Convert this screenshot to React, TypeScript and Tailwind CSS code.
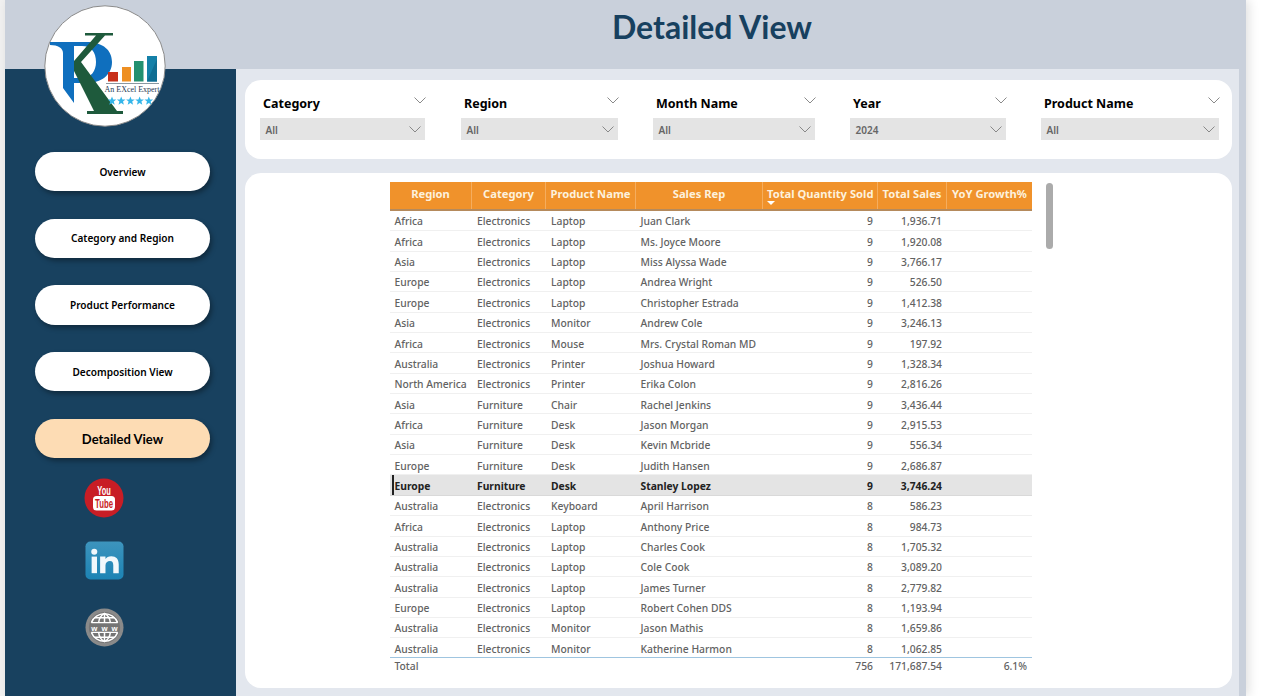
const NAV = ["Overview", "Category and Region", "Product Performance", "Decomposition View"];

const FILTERS = [
  { t: "Category", v: "All", w: "w-[165px]", ml: "ml-0" },
  { t: "Region", v: "All", w: "w-[157px]", ml: "ml-[36px]" },
  { t: "Month Name", v: "All", w: "w-[162px]", ml: "ml-[35px]" },
  { t: "Year", v: "2024", w: "w-[156px]", ml: "ml-[35px]" },
  { t: "Product Name", v: "All", w: "w-[178px]", ml: "ml-[35px]" },
];

const ROWS: string[][] = [
  ["Africa", "Electronics", "Laptop", "Juan Clark", "9", "1,936.71"],
  ["Africa", "Electronics", "Laptop", "Ms. Joyce Moore", "9", "1,920.08"],
  ["Asia", "Electronics", "Laptop", "Miss Alyssa Wade", "9", "3,766.17"],
  ["Europe", "Electronics", "Laptop", "Andrea Wright", "9", "526.50"],
  ["Europe", "Electronics", "Laptop", "Christopher Estrada", "9", "1,412.38"],
  ["Asia", "Electronics", "Monitor", "Andrew Cole", "9", "3,246.13"],
  ["Africa", "Electronics", "Mouse", "Mrs. Crystal Roman MD", "9", "197.92"],
  ["Australia", "Electronics", "Printer", "Joshua Howard", "9", "1,328.34"],
  ["North America", "Electronics", "Printer", "Erika Colon", "9", "2,816.26"],
  ["Asia", "Furniture", "Chair", "Rachel Jenkins", "9", "3,436.44"],
  ["Africa", "Furniture", "Desk", "Jason Morgan", "9", "2,915.53"],
  ["Asia", "Furniture", "Desk", "Kevin Mcbride", "9", "556.34"],
  ["Europe", "Furniture", "Desk", "Judith Hansen", "9", "2,686.87"],
  ["Europe", "Furniture", "Desk", "Stanley Lopez", "9", "3,746.24"],
  ["Australia", "Electronics", "Keyboard", "April Harrison", "8", "586.23"],
  ["Africa", "Electronics", "Laptop", "Anthony Price", "8", "984.73"],
  ["Australia", "Electronics", "Laptop", "Charles Cook", "8", "1,705.32"],
  ["Australia", "Electronics", "Laptop", "Cole Cook", "8", "3,089.20"],
  ["Australia", "Electronics", "Laptop", "James Turner", "8", "2,779.82"],
  ["Europe", "Electronics", "Laptop", "Robert Cohen DDS", "8", "1,193.94"],
  ["Australia", "Electronics", "Monitor", "Jason Mathis", "8", "1,659.86"],
  ["Australia", "Electronics", "Monitor", "Katherine Harmon", "8", "1,062.85"],
];

const COLS = "grid grid-cols-[82px_74px_90px_127px_115px_69px_85px]";
const SANS = "font-['Noto_Sans','Open_Sans',sans-serif]";
const STAR = "M0 -4.4 L1.2 -1.4 L4.3 -1.4 L1.8 0.6 L2.7 3.7 L0 1.9 L-2.7 3.7 L-1.8 0.6 L-4.3 -1.4 L-1.2 -1.4 Z";

function Chevron({ className }: { className?: string }) {
  return (
    <svg width="12" height="7" viewBox="0 0 12 7" fill="none" className={className}>
      <path d="M0.5 0.5 L6 6 L11.5 0.5" stroke="#7d7d7d" strokeWidth="0.9" />
    </svg>
  );
}

function Logo() {
  return (
    <svg viewBox="0 0 122 122" className="w-full h-full">
      <circle cx="61" cy="61" r="60.2" fill="#fff" stroke="#8a8a8a" strokeWidth="1" />
      {/* R */}
      <path
        fillRule="evenodd"
        d="M6 37 H42 C60 37 68 46 68 57 C68 70 57 78 43 78 H30 V98 L19 83 V48 C19 43 14 40 6 40 Z M30 41 V73 H38 C47 73 52 66 52 57 C52 47 47 41 38 41 Z"
        fill="#0f6fbe"
      />
      {/* K */}
      <path
        d="M41 28 H69 V30.5 H61 L37 57 L73 106 H79 V109 H43 V106 H50 L30 66 V56 L52 30.5 H41 Z"
        fill="#1e5a3c"
      />
      {/* bars */}
      <rect x="64" y="67" width="10" height="9.5" fill="#c8301a" />
      <rect x="78" y="62" width="9" height="14.5" fill="#ee8f22" />
      <rect x="90" y="56" width="9.5" height="20.5" fill="#23906f" />
      <rect x="103" y="51" width="10" height="25.5" fill="#1480a8" />
      <path d="M103 76.5 L113 54 V76.5 Z" fill="#0f6d92" />
      <rect x="62" y="78" width="53" height="0.8" fill="#6d7f8a" />
      <text x="88" y="86.5" textAnchor="middle" fontSize="7.6" fontFamily="'Liberation Serif', serif" fill="#1f3b55" textLength="55" lengthAdjust="spacingAndGlyphs">
        An EXcel Expert
      </text>
      {[68, 77.2, 86.4, 95.6, 104.8].map((x) => (
        <path key={x} d={STAR} transform={`translate(${x} 96)`} fill="#35b6ea" />
      ))}
    </svg>
  );
}

function YouTube() {
  return (
    <svg viewBox="0 0 40 40" className="w-[40px] h-[40px]">
      <circle cx="20" cy="20" r="19.5" fill="#c81d25" />
      <text x="20" y="16.5" textAnchor="middle" fontSize="12" fontWeight="700" fill="#fff" fontFamily="'Liberation Sans',sans-serif" textLength="13.5" lengthAdjust="spacingAndGlyphs">You</text>
      <rect x="9" y="18" width="22" height="14.5" rx="3.5" fill="#fff" />
      <text x="20" y="29.5" textAnchor="middle" fontSize="12.5" fontWeight="700" fill="#c81d25" fontFamily="'Liberation Sans',sans-serif" textLength="18" lengthAdjust="spacingAndGlyphs">Tube</text>
    </svg>
  );
}

function LinkedIn() {
  return (
    <svg viewBox="0 0 40 40" className="w-[39px] h-[39px]">
      <defs>
        <linearGradient id="li" x1="0" y1="0" x2="0" y2="1">
          <stop offset="0" stopColor="#3d94bd" />
          <stop offset="1" stopColor="#1c83b4" />
        </linearGradient>
      </defs>
      <rect x="0.5" y="0.5" width="39" height="39" rx="5" fill="url(#li)" />
      <circle cx="9.5" cy="11" r="3.1" fill="#f2f8fb" />
      <rect x="6.8" y="16" width="5.5" height="17" fill="#f2f8fb" />
      <path d="M15.5 16 H21 V18.5 C22 17 24 15.6 27 15.6 C32 15.6 34.6 18.6 34.6 24 V33 H29 V24.8 C29 22 28 20.4 25.6 20.4 C23 20.4 21 22 21 25 V33 H15.5 Z" fill="#f2f8fb" />
    </svg>
  );
}

function Web() {
  return (
    <svg viewBox="0 0 40 40" className="w-[39px] h-[39px]">
      <circle cx="20" cy="20" r="19.5" fill="#8a8a8a" />
      <circle cx="20" cy="20" r="16" fill="#757575" />
      <g fill="none" stroke="#fff" strokeWidth="1.5">
        <path d="M6.5 15 A14.5 14.5 0 0 1 33.5 15" />
        <path d="M6.5 25 A14.5 14.5 0 0 0 33.5 25" />
        <path d="M14 15 C14.5 10 17 7 20 5.5 C23 7 25.5 10 26 15" />
        <path d="M14 25 C14.5 30 17 33 20 34.5 C23 33 25.5 30 26 25" />
        <path d="M20 5.5 V15 M20 25 V34.5" />
        <path d="M9.5 10 H30.5 M9.5 30 H30.5" />
        <path d="M6.5 15 H33.5 M6.5 25 H33.5" />
      </g>
      <text x="20" y="23.2" textAnchor="middle" fontSize="8" fontWeight="700" fill="#fff" fontFamily="'Liberation Sans',sans-serif" textLength="27" lengthAdjust="spacing">www</text>
    </svg>
  );
}

export default function App() {
  return (
    <div className={`relative w-[1280px] h-[696px] overflow-hidden bg-white flex ${SANS}`}>
      <div className="w-[5px] h-full bg-[#f1f1f1]" />
      <div className="w-[1241px] h-full flex flex-col bg-[#c9d0db] shadow-[3px_0_10px_rgba(0,0,0,0.12)]">
        <header className="h-[69px] shrink-0 flex justify-center items-start pt-[5px] pl-[173px]">
          <h1 className="font-['Lato',sans-serif] font-bold text-[32px] leading-[44px] text-[#17405f]">
            Detailed View
          </h1>
        </header>
        <div className="flex-1 flex min-h-0">
          <aside className="w-[231px] shrink-0 bg-[#18415f] flex flex-col items-center pt-[83px] pl-[4px]">
            <div className="flex flex-col gap-[27.3px]">
              {NAV.map((t) => (
                <button
                  key={t}
                  className="w-[175px] h-[39.4px] rounded-[20px] bg-white shadow-[2px_3px_5px_rgba(0,0,0,0.35)] text-[10.1px] font-semibold text-black flex items-center justify-center pt-[1px]"
                >
                  {t}
                </button>
              ))}
              <button className="w-[175px] h-[39.4px] rounded-[20px] bg-[#fddcb4] shadow-[2px_3px_5px_rgba(0,0,0,0.35)] font-['Lato',sans-serif] text-[13px] font-bold text-black flex items-center justify-center pt-[3px]">
                Detailed View
              </button>
            </div>
            <div className="flex flex-col items-center w-[40px] mr-[37px] mt-[20px]">
              <YouTube />
              <div className="mt-[23px]"><LinkedIn /></div>
              <div className="mt-[28px]"><Web /></div>
            </div>
          </aside>
          <main className="flex-1 bg-[#e3e7ee] mr-[7px] pl-[9px] pr-[7px] pt-[11px] flex flex-col">
            <section className="h-[79px] shrink-0 bg-white rounded-[16px] flex pl-[15px] pt-[14px]">
              {FILTERS.map((f) => (
                <div key={f.t} className={`${f.w} ${f.ml} shrink-0`}>
                  <div className="h-[24px] flex items-start justify-between pl-[3px] pr-[1px] pt-[1px]">
                    <span className="text-[12.5px] leading-[18px] font-bold text-black">{f.t}</span>
                    <Chevron className="mt-[2px] -mr-[2px]" />
                  </div>
                  <div className="h-[22px] bg-[#e4e4e4] flex items-center justify-between pl-[5.5px] pr-[4.5px]">
                    <span className="text-[10px] font-semibold text-[#666] pt-[2px]">{f.v}</span>
                    <Chevron className="mt-[1px]" />
                  </div>
                </div>
              ))}
            </section>
            <section className="relative mt-[14px] h-[515px] shrink-0 bg-white rounded-[16px] pt-[9px] pl-[145px]">
              <div className="w-[642px]">
                <div className={`${COLS} h-[29px] bg-[#f0922b] border-b-2 border-[#b58a5c] text-[11.2px] font-bold text-[#fdf1dd]`}>
                  {["Region", "Category", "Product Name", "Sales Rep"].map((t) => (
                    <div key={t} className="flex justify-center pt-[4px] border-r border-[#f5ad5e] whitespace-nowrap">{t}</div>
                  ))}
                  <div className="relative pl-[4px] pt-[4px] border-r border-[#f5ad5e] whitespace-nowrap">
                    Total Quantity Sold
                    <span className="absolute left-[4px] top-[19px] w-0 h-0 border-x-[4px] border-x-transparent border-t-[4px] border-t-white" />
                  </div>
                  <div className="flex justify-center pt-[4px] border-r border-[#f5ad5e] whitespace-nowrap">Total Sales</div>
                  <div className="flex justify-center pt-[4px] whitespace-nowrap">YoY Growth%</div>
                </div>
                <div className="h-[445.5px] overflow-hidden">
                  {ROWS.map((r, i) => {
                    const sel = i === 13;
                    return (
                      <div
                        key={i}
                        className={`relative ${COLS} h-[20.35px] pt-[3px] items-center text-[10.3px] border-b ${
                          sel ? "bg-[#e4e4e4] text-[#222] font-bold border-[#d9d9d9]" : "text-[#626262] font-medium border-[#f0f0f0]"
                        }`}
                      >
                        {sel && <span className="absolute left-[2px] top-0 bottom-0 w-[2px] bg-[#222]" />}
                        <span className="pl-[4.5px] whitespace-nowrap">{r[0]}</span>
                        <span className="pl-[5px] whitespace-nowrap">{r[1]}</span>
                        <span className="pl-[5px] whitespace-nowrap">{r[2]}</span>
                        <span className="pl-[4.5px] whitespace-nowrap">{r[3]}</span>
                        <span className="text-right pr-[5px]">{r[4]}</span>
                        <span className="text-right pr-[5px]">{r[5]}</span>
                        <span />
                      </div>
                    );
                  })}
                </div>
                <div className={`${COLS} h-[18px] pt-[1px] items-center border-t border-[#9fc5e0] text-[10.3px] font-medium text-[#626262]`}>
                  <span className="pl-[4.5px]">Total</span>
                  <span />
                  <span />
                  <span />
                  <span className="text-right pr-[5px]">756</span>
                  <span className="text-right pr-[5px]">171,687.54</span>
                  <span className="text-right pr-[5px]">6.1%</span>
                </div>
              </div>
              <div className="absolute left-[801px] top-[10px] w-[7px] h-[66px] rounded-[4px] bg-[#ababab]" />
            </section>
          </main>
        </div>
      </div>
      <div className="absolute left-[43.5px] top-[5px] w-[122px] h-[122px]">
        <Logo />
      </div>
    </div>
  );
}
